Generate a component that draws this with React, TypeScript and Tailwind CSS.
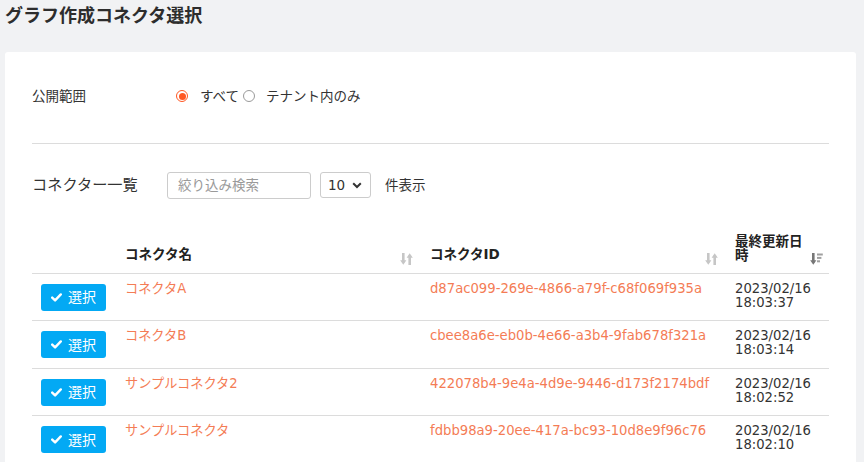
import React from "react";

const rows = [
  { name: "コネクタA", id: "d87ac099-269e-4866-a79f-c68f069f935a", d: "2023/02/16", t: "18:03:37" },
  { name: "コネクタB", id: "cbee8a6e-eb0b-4e66-a3b4-9fab678f321a", d: "2023/02/16", t: "18:03:14" },
  { name: "サンプルコネクタ2", id: "422078b4-9e4a-4d9e-9446-d173f2174bdf", d: "2023/02/16", t: "18:02:52" },
  { name: "サンプルコネクタ", id: "fdbb98a9-20ee-417a-bc93-10d8e9f96c76", d: "2023/02/16", t: "18:02:10" },
];

function SortBoth() {
  return (
    <svg width="13" height="14" viewBox="0 0 13 14" className="absolute right-[7px] bottom-[7px]">
      <path d="M3.3 1 V10.5" stroke="#c6c6c6" strokeWidth="2.6" />
      <path d="M0.2 8.2 L3.3 12.8 L6.4 8.2 Z" fill="#c6c6c6" />
      <path d="M9.7 13 V3.5" stroke="#c6c6c6" strokeWidth="2.6" />
      <path d="M6.6 5.8 L9.7 1.2 L12.8 5.8 Z" fill="#c6c6c6" />
    </svg>
  );
}

function SortDesc() {
  return (
    <svg width="13" height="14" viewBox="0 0 13 14" className="absolute right-[6px] bottom-[7px]">
      <path d="M3.3 1 V10.5" stroke="#777" strokeWidth="2.6" />
      <path d="M0.2 8.2 L3.3 12.8 L6.4 8.2 Z" fill="#777" />
      <rect x="7" y="1.5" width="5.8" height="2" fill="#a0a0a0" />
      <rect x="7" y="4.9" width="4.4" height="2" fill="#a0a0a0" />
      <rect x="7" y="8.3" width="3" height="2" fill="#a0a0a0" />
    </svg>
  );
}

function CheckIcon() {
  return (
    <svg width="11" height="9" viewBox="0 0 11 9">
      <path d="M1.2 4.6 L4.1 7.4 L9.8 1.4" stroke="white" strokeWidth="2.4" fill="none" strokeLinecap="round" strokeLinejoin="round" />
    </svg>
  );
}

export default function App() {
  const font = { fontFamily: '"DejaVu Sans", "Noto Sans CJK JP", "Noto Sans", sans-serif' };
  return (
    <div className="w-[864px] h-[462px] overflow-hidden bg-[#f1f2f4] text-[#333]" style={font}>
      <div className="h-[52px] pl-[5px] pt-[4px] text-[18px] font-bold leading-[24px] text-[#2d2d2d]">
        グラフ作成コネクタ選択
      </div>
      <div className="ml-[5px] w-[851px] h-[420px] bg-white rounded-[3px] px-[27px] pt-[30px]">
        <div className="h-[28px] flex items-center text-[13.5px]">
          <div className="w-[144px]">公開範囲</div>
          <div className="flex items-center">
            <span className="w-[12px] h-[12px] rounded-full border border-[#ff5722] flex items-center justify-center">
              <span className="w-[7px] h-[7px] rounded-full bg-[#ff5722]" />
            </span>
            <span className="ml-[12px]">すべて</span>
            <span className="ml-[4px] w-[12px] h-[12px] rounded-full border border-[#9a9a9a]" />
            <span className="ml-[11px]">テナント内のみ</span>
          </div>
        </div>
        <div className="mt-[33px] border-t border-[#dcdcdc]" />
        <div className="mt-[27px] h-[28px] flex items-center">
          <div className="w-[135px] text-[15.2px]">コネクター一覧</div>
          <div className="w-[144px] h-[27px] border border-[#ccc] rounded-[3px] flex items-center pl-[10px] text-[13.5px] text-[#9a9a9a]">
            絞り込み検索
          </div>
          <div className="ml-[9px] w-[51px] h-[26px] border border-[#ccc] rounded-[3px] flex items-center pl-[7px] pr-[8px] justify-between text-[13.5px]">
            <span>10</span>
            <svg width="10" height="7" viewBox="0 0 10 7">
              <path d="M1.2 1.3 L5 5 L8.8 1.3" stroke="#333" strokeWidth="2" fill="none" />
            </svg>
          </div>
          <div className="ml-[14px] text-[13.5px]">件表示</div>
        </div>
        <table className="mt-[26px] w-[797px] table-fixed border-collapse text-[13.2px] leading-[14px]">
          <colgroup>
            <col className="w-[83px]" />
            <col className="w-[305px]" />
            <col className="w-[305px]" />
            <col className="w-[104px]" />
          </colgroup>
          <thead>
            <tr className="h-[48px] border-b border-[#dcdcdc]">
              <th />
              <th className="relative align-bottom text-left font-bold pl-[10px] pb-[12px] text-[#222] text-[13.5px]">
                コネクタ名
                <SortBoth />
              </th>
              <th className="relative align-bottom text-left font-bold pl-[10px] pb-[12px] text-[#222] text-[13.5px]">
                コネクタID
                <SortBoth />
              </th>
              <th className="relative align-bottom text-left font-bold pl-[10px] pr-[24px] pb-[11px] text-[#222] text-[13.5px]">
                最終更新日時
                <SortDesc />
              </th>
            </tr>
          </thead>
          <tbody>
            {rows.map((r) => (
              <tr key={r.id} className="h-[47.6px] border-b border-[#dcdcdc] align-top">
                <td className="pl-[9px] pt-[10px]">
                  <button className="w-[65px] h-[27px] rounded-[3px] bg-[#03a9f4] text-white flex items-center justify-center gap-[6px] text-[14px]">
                    <CheckIcon />
                    <span>選択</span>
                  </button>
                </td>
                <td className="pl-[10px] pt-[8px] text-[#f47c55]">{r.name}</td>
                <td className="pl-[10px] pt-[8px] text-[#f47c55]">{r.id}</td>
                <td className="pl-[10px] pt-[8px] pb-[9px] text-[#333]">
                  <div>{r.d}</div>
                  <div>{r.t}</div>
                </td>
              </tr>
            ))}
          </tbody>
        </table>
      </div>
    </div>
  );
}
